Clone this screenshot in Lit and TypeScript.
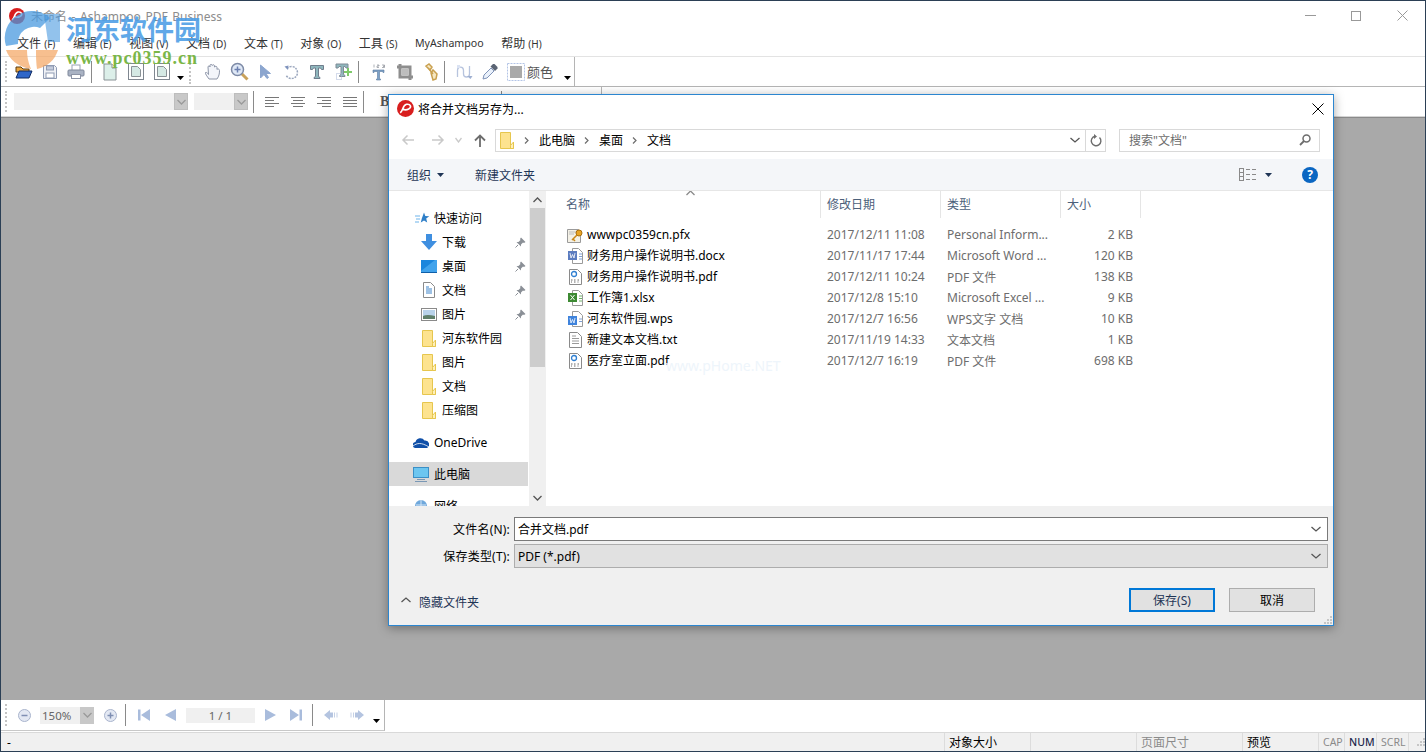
import { LitElement, html, svg, css } from "lit";
import { customElement } from "lit/decorators.js";

const ic = (w: number, h: number, body: unknown) =>
  html`<svg width=${w} height=${h} viewBox="0 0 ${w} ${h}" fill="none">${body}</svg>`;

const s = {
  logo: (n = 16) => html`<svg width=${n} height=${n} viewBox="0 0 16 16"><circle cx="8" cy="8" r="8" fill="#d81e1e"/><path d="M3 12 C6 10 5 5 9 4 C13 3.500 14 7 11 8.500 C9 9.500 7 9.500 5.500 8.500" fill="none" stroke="#fff" stroke-width="1.500"/></svg>`,
  open: ic(18, 16, svg`<path d="M1 3h5l2 2h6v3H1z" fill="#e8a33c" stroke="#5a3a10"/><path d="M1 14 4 7h13l-3 7z" fill="#2f66c8" stroke="#102a60"/>`),
  save: ic(16, 16, svg`<path d="M1.500 1.500h11l2 2v11h-13z" fill="#eef0f5" stroke="#8f9bb3"/><rect x="4.500" y="2" width="7" height="4" fill="#c4cbdb" stroke="#8f9bb3"/><rect x="4" y="9" width="8" height="5" fill="#fff" stroke="#8f9bb3"/>`),
  print: ic(18, 16, svg`<rect x="5" y="1" width="8" height="6" fill="#fff" stroke="#9aa3b5"/><rect x="1" y="6" width="16" height="6" rx="1" fill="#a9b2c3" stroke="#7f889b"/><rect x="4.500" y="10.500" width="9" height="4" fill="#fff" stroke="#8b93a5"/>`),
  doc: ic(16, 18, svg`<path d="M2 1h8l4 4v12H2z" fill="#dcefe9" stroke="#8a9296"/><path d="M10 1v4h4" fill="#fff" stroke="#8a9296"/>`),
  docf: ic(16, 18, svg`<rect x=".5" y=".5" width="15" height="16" fill="#fff" stroke="#7f8790"/><path d="M3.500 3.500h6l3 3v7h-9z" fill="#d5e9e4" stroke="#8a9296"/>`),
  hand: ic(18, 18, svg`<path d="M5 16C3 13 1 11 1.500 9.500 3 9 4 10.500 4.500 11.500L4 4C4 2.500 6 2.500 6 4V2.500C6 1 8 1 8.300 2.500V2.500C8.500 1.300 10.500 1.500 10.500 3V4C11 3 13 3 13 4.500V6.500C13.500 5.500 15.500 5.800 15.500 7.500 15.500 11 15 13 13 16z" fill="#f3f5fa" stroke="#8e96a8"/>`),
  zoom: ic(19, 19, svg`<path d="M11.500 11.500 17.500 17.500" stroke="#c9a25b" stroke-width="3"/><circle cx="7.500" cy="7.500" r="6" fill="#dfe8f6" stroke="#7d8aa6" stroke-width="1.500"/><path d="M4.500 7.500h6M7.500 4.500v6" stroke="#6b7fb0" stroke-width="1.500"/>`),
  arrow: ic(12, 16, svg`<path d="M1.500 1v13l3.500-3.500 3 4 1.500-1-2.500-4h4.500z" fill="#8ca6cf" stroke="#8ca6cf"/>`),
  rotate: ic(16, 16, svg`<path d="M4 4.500A6 6 0 1 1 3 11" stroke="#9aa6bd" stroke-width="1.500" stroke-dasharray="2 1"/><path d="M1.500 2.500 5.500 1.500 5 6z" fill="#7f93bd"/>`),
  t: ic(16, 16, svg`<path d="M1.500 1.500h13v4h-2l-1-1.500H9.500v8.500l1.500 1v1H5v-1l1.500-1V4H4.500l-1 1.500h-2z" fill="#8fb7bd" stroke="#6f7d8c"/>`),
  tp: ic(17, 17, svg`<path d="M1 1h12v4h-2l-1-1.500H8.500v8l1.500 1v1H4.500v-1l1.500-1v-8H4L3 5H1z" fill="#8fb7bd" stroke="#7f8a96"/><path d="M9 8h3V5h2v3h3v2h-3v3h-2v-3H9z" fill="#7fc96b"/><rect x="1.500" y="10.500" width="5" height="6" stroke="#a9b7d6" stroke-dasharray="1 1"/>`),
  t123: ic(16, 18, svg`<path d="M2 7h11v2.500h-1l-.5-1H8.500V15.500l1 .5v1H5.500v-1l1-.5V8.500H3.500L3 9.500H2z" fill="#7da3c9" stroke="#5c7aa0" stroke-width=".6"/><path d="M3 1.500v3M6 2h2v1H6v1.500h2M11 2h2.500v1.200H12h1.500v1.300H11" stroke="#8b8f98" stroke-width=".7"/>`),
  crop: ic(18, 18, svg`<path d="M4 1v13h13M1 4h13v13" stroke="#8e8e8e" stroke-width="3"/><rect x="5.500" y="5.500" width="7" height="7" fill="#bdbdbd"/>`),
  link: ic(14, 18, svg`<path d="M2 3 5 1l3 3-2 3zM7 10l2-3 4 4-1 5-3 1z" fill="#f6e8c3" stroke="#c9a04f" stroke-width="1.500"/><path d="M5 6l4 5" stroke="#c9a04f" stroke-width="1.500"/>`),
  pth: ic(17, 16, svg`<path d="M1.500 13V6.500C1.500 2 7.500 2 7.500 6.500V10C7.500 14 13.500 14 13.500 10V2" stroke="#b7c4de" stroke-width="1.300"/><path d="M11 12l3.500 3 2-3z" fill="#9fb0d1"/><rect x="1" y="1" width="3" height="3" fill="#dbe3f3"/>`),
  dropper: ic(16, 17, svg`<path d="M1 16 2 12 9 5 12 8 5 15z" fill="#eaf1fb" stroke="#7f93b8"/><path d="M8.500 3.500 11 1l1.500 0 3 3 0 1.500-2.500 2.500z" fill="#5b6474"/>`),
  color: ic(18, 18, svg`<rect x=".5" y=".5" width="17" height="17" fill="#fff" stroke="#b3c4e6" stroke-dasharray="2 1"/><rect x="3" y="3" width="12" height="12" fill="#a9a9a9"/>`),
  al: ic(14, 10, svg`<path d="M0 .5h14M0 3.500h9M0 6.500h14M0 9.500h9" stroke="#777"/>`),
  ac: ic(14, 10, svg`<path d="M0 .5h14M2 3.500h10M0 6.500h14M2 9.500h10" stroke="#777"/>`),
  ar: ic(14, 10, svg`<path d="M0 .5h14M5 3.500h9M0 6.500h14M5 9.500h9" stroke="#777"/>`),
  aj: ic(14, 10, svg`<path d="M0 .5h14M0 3.500h14M0 6.500h14M0 9.500h14" stroke="#777"/>`),
  minus: ic(13, 13, svg`<circle cx="6.500" cy="6.500" r="6" fill="#e3e8f3" stroke="#a9b4cc"/><path d="M3.500 6.500h6" stroke="#7f8fb3" stroke-width="1.500"/>`),
  plus: ic(13, 13, svg`<circle cx="6.500" cy="6.500" r="6" fill="#e3e8f3" stroke="#a9b4cc"/><path d="M3.500 6.500h6M6.500 3.500v6" stroke="#7f8fb3" stroke-width="1.500"/>`),
  first: ic(12, 12, svg`<path d="M0 .500h2.500v11H0zM12 0v12L3 6z" fill="#a9bcdc"/>`),
  prev: ic(11, 12, svg`<path d="M11 0v12L0 6z" fill="#a9bcdc"/>`),
  next: ic(11, 12, svg`<path d="M0 0v12L11 6z" fill="#a9bcdc"/>`),
  last: ic(12, 12, svg`<path d="M12 .5H9.500v11H12zM0 0v12L9 6z" fill="#a9bcdc"/>`),
  hback: ic(14, 10, svg`<path d="M0 5 6 0v2.500h3v5H6V10z" fill="#b4c4e0"/><path d="M10.500 2.500v5M13 2.500v5" stroke="#c5d1e6"/>`),
  hfwd: ic(14, 10, svg`<path d="M14 5 8 0v2.500H5v5h3V10z" fill="#b4c4e0"/><path d="M3.500 2.500v5M1 2.500v5" stroke="#c5d1e6"/>`),
  drop: ic(7, 4, svg`<path d="M0 0h7L3.500 4z" fill="#000"/>`),
  back: (c: string) => ic(14, 12, svg`<path d="M13 6H2M6.500 1.500 2 6l4.500 4.500" stroke=${c} stroke-width="1.500"/>`),
  fwd: (c: string) => ic(14, 12, svg`<path d="M1 6h11M7.500 1.500 12 6l-4.500 4.500" stroke=${c} stroke-width="1.500"/>`),
  up: ic(14, 13, svg`<path d="M7 13V2M2 6.500 7 1.500l5 5" stroke="#6d6d6d" stroke-width="1.800"/>`),
  chev: (c: string, w = 9) => ic(w, 6, svg`<path d="M.5 1 ${w / 2} 5 ${w - .5} 1" stroke=${c} stroke-width="1.300"/>`),
  chevUp: (c: string, w = 9) => ic(w, 6, svg`<path d="M.5 5 ${w / 2} 1 ${w - .5} 5" stroke=${c} stroke-width="1.300"/>`),
  crumb: ic(5, 7, svg`<path d="M1 .5 4 3.500 1 6.500" stroke="#6d6d6d" stroke-width="1.200"/>`),
  folder: ic(14, 17, svg`<path d="M.5.5h10v13h3v3H.5z" fill="#fde38f" stroke="#e6c64e"/><path d="M10.500 13.500 13.500 10v6.500h-3z" fill="#fff0b8" stroke="#e6c64e"/>`),
  refresh: ic(12, 13, svg`<path d="M9.500 3.500A4.800 4.800 0 1 1 5 2.200" stroke="#6d6d6d" stroke-width="1.400"/><path d="M4 0v5l3-2.500z" fill="#6d6d6d"/>`),
  search: ic(12, 12, svg`<circle cx="7.500" cy="4.500" r="3.500" stroke="#6d6d6d" stroke-width="1.500"/><path d="M5 7 1 11" stroke="#6d6d6d" stroke-width="1.800"/>`),
  caret: ic(7, 4, svg`<path d="M0 0h7L3.500 4z" fill="#1f3556"/>`),
  view: ic(17, 13, svg`<rect x=".5" y=".5" width="4" height="12" stroke="#8a8a8a"/><path d="M.5 4.500h4M.5 8.500h4M7 1.500h4M13 1.500h4M7 6.500h4M13 6.500h4M7 11.500h4M13 11.500h4" stroke="#8a8a8a"/>`),
  star: ic(15, 13, svg`<path d="M9 .5l1.300 3.500 4 .2-3.100 2.400 1 3.900L9 8.400l-3.200 2.100 1-3.900z" fill="#2f7fc8"/><path d="M0 4h5M1 7h4M0 10h4" stroke="#6db3ea"/>`),
  download: ic(16, 16, svg`<path d="M5 0h6v7h5l-8 9-8-9h5z" fill="#3f8fe0"/>`),
  desktop: ic(16, 13, svg`<rect width="16" height="12" fill="#1b86dd"/><path d="M0 12h16v1H0z" fill="#0f5fa8"/><path d="M0 11 14 0h2v12H0z" fill="#41a3ec"/>`),
  document: ic(12, 16, svg`<path d="M.5.5h7l4 4v11H.5z" fill="#fff" stroke="#8a8a8a"/><path d="M3 7h6M3 9h6M3 11h6M3 5h3" stroke="#3c83c8"/>`),
  picture: ic(16, 13, svg`<rect x=".5" y=".5" width="15" height="12" fill="#fff" stroke="#8a8a8a"/><rect x="2" y="2" width="12" height="9" fill="#b8d2ea"/><path d="M2 11V8q4-2 12 0v3z" fill="#5f7f6a"/>`),
  pin: ic(11, 11, svg`<path d="M6 .5 10.500 5 9 6 8 5.500 6 7.500 6 9.500 1.500 5 3.500 5 5.500 3 5 2z" fill="#8a8f96"/><path d="M3 8 .5 10.500" stroke="#8a8f96"/>`),
  cloud: ic(16, 11, svg`<path d="M3 11A3 3 0 0 1 2.500 5 5 5 0 0 1 11.500 3.500 4 4 0 0 1 14 11z" fill="#0f4fa8"/><path d="M0 9 C4 6 8 5 16 10" stroke="#fff" stroke-width=".8"/>`),
  pc: ic(16, 15, svg`<rect x=".5" y=".5" width="15" height="10" fill="#6cc6f0" stroke="#3b8fc6"/><path d="M4 12.500h8M2 14.500h12" stroke="#7a98b5" stroke-width="1.200"/>`),
  net: ic(16, 15, svg`<circle cx="8" cy="7" r="6" fill="#6fa8dc"/><path d="M3 6h10M8 1v12" stroke="#d6e6f5"/><path d="M0 14h16" stroke="#7a98b5" stroke-width="1.500"/>`),
  pfx: ic(16, 16, svg`<path d="M.5 2.500h11l2 2V15.500H.5z" fill="#f4f1e6" stroke="#9a9a9a"/><path d="M2 5h8M2 7h5" stroke="#bbb"/><circle cx="12" cy="6" r="3" fill="#e8a526" stroke="#a96f10"/><path d="M10 8 5 13M6 12l2 2" stroke="#c98716" stroke-width="1.500"/>`),
  word: ic(15, 16, svg`<path d="M4.500.5h6l4 4v11h-10z" fill="#fff" stroke="#9a9a9a"/><rect y="3" width="9" height="9" fill="#5b7cc0"/><path d="M2 5l1 5 1.500-3.500L6 10l1-5" stroke="#fff" stroke-width=".8"/><path d="M11 6h3M11 8.500h3M11 11h3" stroke="#7fa0d6"/>`),
  wps: ic(15, 16, svg`<path d="M4.500.5h6l4 4v11h-10z" fill="#fff" stroke="#9a9a9a"/><rect y="5" width="9" height="9" fill="#3f83dc"/><path d="M2 7l1 5 1.500-3.500L6 12l1-5" stroke="#fff" stroke-width=".8"/><path d="M11 8h3M11 10.500h3" stroke="#7fa0d6"/>`),
  excel: ic(15, 16, svg`<path d="M4.500.5h6l4 4v11h-10z" fill="#fff" stroke="#9a9a9a"/><rect y="3" width="9" height="9" fill="#3d8a33"/><path d="M2.500 5 6.500 10M6.500 5l-4 5" stroke="#fff"/><path d="M11 6h3M11 8.500h3M11 11h3" stroke="#6fb268"/>`),
  pdf: ic(13, 16, svg`<path d="M.5.5h8l4 4v11H.5z" fill="#fff" stroke="#8a8a8a"/><circle cx="5" cy="5" r="2.500" stroke="#2f7fd1" stroke-width="1.300"/><path d="M2 11h1.500M5 11h1.500M8.500 11h1.500M2 13h1M5 13h1.500M8.500 13h1" stroke="#666"/>`),
  txt: ic(13, 16, svg`<path d="M.5.5h8l4 4v11H.5z" fill="#fff" stroke="#8a8a8a"/><path d="M3 4h4M3 6.500h7M3 9h7M3 11.500h7" stroke="#9a9a9a"/>`),
  grip: ic(9, 8, svg`<path d="M7 0h2v2H7zM4 3h2v2H4zM7 3h2v2H7zM1 6h2v2H1zM4 6h2v2H4zM7 6h2v2H7z" fill="#c6c6c6"/>`),
  wm: html`<svg width="66" height="66" viewBox="0 0 66 66"><path d="M6 40A27 27 0 0 1 50 12L40 22A16 16 0 0 0 18 38z" fill="#4a9adf" opacity=".75"/><path d="M6 44h21c0 6 1 12 4 19C18 61 9 53 6 44z" fill="#f4a460" opacity=".7"/><path d="M36 44h22C55 54 47 61 37 63c-1-6-1-13-1-19z" fill="#f4a460" opacity=".7"/><path d="M44 8 60 8V36H48z" fill="#4a9adf" opacity=".6"/></svg>`,
};

const nav = [
  { icon: s.star, label: "快速访问", head: true },
  { icon: s.download, label: "下载", pin: true },
  { icon: s.desktop, label: "桌面", pin: true },
  { icon: s.document, label: "文档", pin: true },
  { icon: s.picture, label: "图片", pin: true },
  { icon: s.folder, label: "河东软件园" },
  { icon: s.folder, label: "图片" },
  { icon: s.folder, label: "文档" },
  { icon: s.folder, label: "压缩图" },
];

const files = [
  [s.pfx, "wwwpc0359cn.pfx", "2017/12/11 11:08", "Personal Inform...", "2 KB"],
  [s.word, "财务用户操作说明书.docx", "2017/11/17 17:44", "Microsoft Word ...", "120 KB"],
  [s.pdf, "财务用户操作说明书.pdf", "2017/12/11 10:24", "PDF 文件", "138 KB"],
  [s.excel, "工作簿1.xlsx", "2017/12/8 15:10", "Microsoft Excel ...", "9 KB"],
  [s.wps, "河东软件园.wps", "2017/12/7 16:56", "WPS文字 文档", "10 KB"],
  [s.txt, "新建文本文档.txt", "2017/11/19 14:33", "文本文档", "1 KB"],
  [s.pdf, "医疗室立面.pdf", "2017/12/7 16:19", "PDF 文件", "698 KB"],
];

@customElement("app-root")
export class AppRoot extends LitElement {
  static styles = css`
    :host {
      display: block;
      position: relative;
      width: 100%;
      height: 752px;
      overflow: hidden;
      background: #fff;
      font-family: "Noto Sans", "Noto Sans CJK SC", sans-serif;
      font-size: 12px;
      color: #000;
    }
    svg { display: block; flex: none; }
    .app { height: 752px; box-sizing: border-box; display: flex; flex-direction: column; border: 1px solid #2b3f55; }
    .title { height: 29px; display: flex; align-items: center; padding-left: 8px; color: #8c8c8c; flex: none; }
    .title .name { flex: 1; font-size: 12px; word-spacing: 1.500px; margin-left: 6px; }
    .wc { width: 46px; height: 29px; display: flex; align-items: center; justify-content: center; }
    .menu { height: 26px; flex: none; display: flex; align-items: center; padding-left: 16px; gap: 17.600px; border-bottom: 1px solid #e3e3e3; color: #333; font-size: 12px; }
    .menu small { font-size: 10px; }
    .menu .my { font-size: 10.600px; }
    .bar { flex: none; display: flex; height: 30px; box-sizing: border-box; border-bottom: 1px solid #d5d5d5; }
    .bar1 { border-bottom-color: #b5b5b5; }
    .tb { display: flex; align-items: center; padding-left: 10px; box-sizing: border-box; height: 100%; position: relative; }
    .tb.t1 { width: 574px; border-right: 1px solid #b5b5b5; }
    .tb.t2 { width: 601px; border-right: 1px solid #b5b5b5; }
    .grip { position: absolute; left: 4px; top: 4px; bottom: 4px; width: 2px; border-left: 2px dotted #c4c4c4; }
    .slot { width: 26px; height: 100%; display: flex; align-items: center; justify-content: center; flex: none; }
    .sep { width: 1px; height: 22px; background: #8a8a8a; flex: none; margin: 0 5px 0 2px; }
    .sep.b { margin: 0; }
    .sep.n { margin: 0; }
    .sep.w { margin: 0 7px 0 2px; }
    .sep.m { margin: 0 5px 0 2px; }
    .sep.m3 { margin: 0 5px 0 3px; }
    .dotsep { width: 2px; height: 24px; border-left: 2px dotted #c4c4c4; margin: 0 7px 0 5px; flex: none; }
    .dd { margin: 12px 0 0 2px; flex: none; }
    .dd.m3 { margin-left: 3px; }
    .coltxt { width: 35px; color: #555; font-size: 13px; flex: none; margin-left: -2px; }
    .combo { height: 17px; background: #f0f0f0; display: flex; justify-content: flex-end; flex: none; }
    .combo i { width: 14px; height: 17px; background: #c8c8c8; display: flex; align-items: center; justify-content: center; border: 1px solid #bdbdbd; box-sizing: border-box; }
    .c1 { width: 174px; margin-left: 3px; }
    .c2 { width: 54px; margin-left: 6px; }
    .t2 .sep.a { margin: 0 5px 0 5px; }
    .aslot { width: 26px; display: flex; justify-content: center; flex: none; }
    .bold { font-family: "Liberation Serif", serif; font-weight: bold; font-size: 14px; color: #555; margin-left: 16px; width: 121px; flex: none; }
    .pth { margin-left: 6px; }
    .canvas { flex: 1; background: #a9a9a9; border-top: 1px solid #8a8a8a; }
    .bottom { height: 32px; flex: none; display: flex; }
    .tb.t3 { width: 384px; border-right: 1px solid #b5b5b5; border-bottom: 1px solid #c8c8c8; padding-left: 10px; height: 31px; }
    .z { width: 26px; display: flex; justify-content: center; flex: none; }
    .z.ml { margin-left: 2px; }
    .zc { width: 54px; margin: 0 3px 0 3px; background: #f0f0f0; height: 17px; color: #666; display: flex; justify-content: space-between; flex: none; font-size: 11.500px; line-height: 17px; padding-left: 2px; box-sizing: border-box; }
    .zc i { width: 14px; background: #c8c8c8; display: flex; align-items: center; justify-content: center; }
    .pg { width: 69px; height: 15px; line-height: 15px; background: #f0f0f0; color: #666; text-align: center; flex: none; font-size: 11.500px; margin-left: 3px; }
    .status { height: 18px; flex: none; background: #f0f0f0; border-top: 1px solid #d9d9d9; display: flex; align-items: center; font-size: 12px; }
    .st { height: 100%; box-sizing: border-box; padding-left: 4px; border-right: 1px solid #dcdcdc; flex: none; display: flex; align-items: center; white-space: nowrap; overflow: hidden; }
    .st.gray { color: #8a8a8a; }
    .st.sm { font-size: 10.500px; }
    .st.strong { font-weight: 500; color: #1f2a4d; }
    .st.first { padding-left: 6px; width: 944px; }
    .w86 { width: 86px; } .w106 { width: 106px; } .w76 { width: 76px; } .w26 { width: 26px; } .w32 { width: 32px; }
    .sgrip { margin-left: 7px; }

    .wm { position: absolute; left: 0; top: 6px; pointer-events: none; }
    .wmt { position: absolute; left: 66px; top: 12px; font-size: 27px; line-height: 36px; font-weight: 700; color: #4f9fe6; opacity: .9; white-space: nowrap; pointer-events: none; }
    .wmu { position: absolute; left: 66px; top: 47px; font: bold 18px/22px "Liberation Serif", serif; letter-spacing: 1px; color: #7ab648; white-space: nowrap; pointer-events: none; }

    .dlg { position: absolute; left: 388px; top: 94px; width: 946px; height: 532px; box-sizing: border-box; background: #fff; border: 1px solid #2c86d0; box-shadow: 0 2px 10px rgba(0,0,0,.35); display: flex; flex-direction: column; }
    .dt { height: 27px; flex: none; display: flex; align-items: center; padding-left: 8px; gap: 4px; color: #000; }
    .dt span { flex: 1; }
    .dt b { width: 30px; display: flex; justify-content: center; }
    .dnav { height: 30px; margin-top: 3px; flex: none; display: flex; align-items: center; }
    .nb { flex: none; display: flex; justify-content: center; }
    .n1 { width: 14px; margin-left: 12px; }
    .n2 { width: 14px; margin-left: 16px; }
    .n3 { width: 9px; margin-left: 9px; }
    .n4 { width: 14px; margin-left: 10px; }
    .addr { width: 611px; height: 23px; margin-left: 8px; box-sizing: border-box; border: 1px solid #d9d9d9; display: flex; align-items: center; padding-left: 4px; flex: none; }
    .addr .p { margin-left: 10px; }
    .addr span { margin: 0 9px 0 10px; color: #000; }
    .addr .sp { flex: 1; }
    .addr .rf { width: 19px; height: 100%; border-left: 1px solid #d9d9d9; display: flex; align-items: center; justify-content: center; margin-left: 5px; }
    .srch { width: 201px; height: 23px; margin-left: 13px; box-sizing: border-box; border: 1px solid #d9d9d9; display: flex; align-items: center; justify-content: space-between; padding: 0 8px 0 9px; color: #6d6d6d; flex: none; }
    .cmd { height: 31px; margin-top: 4px; flex: none; background: #f4f6f9; border-bottom: 1px solid #e6e6e6; display: flex; align-items: center; color: #1f3556; padding-left: 18px; }
    .cmd .org { display: flex; align-items: center; gap: 6px; width: 68px; }
    .cmd .gap { flex: 1; }
    .cmd .v { margin-right: 9px; }
    .help { width: 16px; height: 16px; border-radius: 50%; background: #0a66c2; color: #fff; font-weight: 700; font-size: 12px; line-height: 16px; text-align: center; margin: 0 15px 0 30px; }
    .body { height: 315px; flex: none; display: flex; overflow: hidden; }
    .np { width: 140px; flex: none; padding: 15px 1px 0 0; box-sizing: border-box; overflow: hidden; }
    .ni { height: 24px; display: flex; align-items: center; position: relative; color: #000; }
    .ni .ico { width: 16px; margin-left: 32px; margin-right: 5px; display: flex; justify-content: center; flex: none; }
    .ni.h .ico { margin-left: 25px; margin-right: 4px; }
    .ni.l .ico { margin-left: 24px; margin-right: 5px; }
    .ni .pn { position: absolute; right: 2px; top: 7px; }
    .ni.sel { background: #d9d9d9; }
    .gapped { margin-top: 8px; }
    .sb { width: 17px; flex: none; background: #f0f0f0; display: flex; flex-direction: column; align-items: center; }
    .sb .a { height: 17px; display: flex; align-items: center; justify-content: center; flex: none; }
    .sb .th { width: 15px; height: 159px; background: #cdcdcd; flex: none; margin-right: 1px; }
    .sb .sp { flex: 1; }
    .list { flex: 1; position: relative; min-width: 0; }
    .hdr { height: 27px; display: flex; color: #4c607a; position: relative; }
    .hc { border-right: 1px solid #e5e5e5; padding-left: 6px; box-sizing: border-box; line-height: 27px; flex: none; }
    .hc.name { width: 275px; padding-left: 20px; }
    .hc.date, .hc.type { width: 120px; }
    .hc.size { width: 80px; }
    .sort { position: absolute; left: 140px; top: -1px; }
    .rows { padding-top: 6px; }
    .row { height: 21px; display: flex; align-items: center; color: #6d6d6d; }
    .row .fi { width: 16px; margin-left: 21px; margin-right: 4px; display: flex; justify-content: center; flex: none; }
    .row .n { width: 240px; color: #000; flex: none; white-space: nowrap; }
    .row + .row .n { margin-bottom: 2px; }
    .row .d { width: 120px; flex: none; }
    .row .t { width: 120px; flex: none; white-space: nowrap; }
    .row .s { width: 66px; text-align: right; flex: none; }
    .faint { position: absolute; left: 120px; top: 165px; color: #eef5fb; font-size: 14px; }
    .foot { flex: 1; background: #f0f0f0; display: flex; flex-direction: column; position: relative; }
    .fr { display: flex; align-items: center; flex: none; }
    .fr label { width: 121px; text-align: right; color: #000; flex: none; letter-spacing: .2px; }
    .in { margin-left: 4px; width: 814px; box-sizing: border-box; display: flex; align-items: center; justify-content: space-between; padding: 0 6px 0 3px; flex: none; }
    .in.a { height: 24px; background: #fff; border: 1px solid #7a7a7a; }
    .in.b { height: 24px; background: #e1e1e1; border: 1px solid #adadad; }
    .r1 { margin-top: 11px; }
    .r2 { margin-top: 3px; }
    .act { display: flex; align-items: center; margin-top: 20px; padding-left: 12px; }
    .act .hide { margin-left: 8px; flex: 1; color: #1f3556; padding-top: 4px; }
    .btn { width: 86px; height: 24px; box-sizing: border-box; background: #e1e1e1; border: 1px solid #adadad; display: flex; align-items: center; justify-content: center; flex: none; }
    .btn.pri { border: 2px solid #0078d7; color: #1f3556; margin-right: 14px; }
    .btn.sec { margin-right: 18px; }
    .dgrip { position: absolute; right: 1px; bottom: 1px; }
  `;

  private slots(list: unknown[]) {
    return list.map((i) => html`<div class="slot">${i}</div>`);
  }

  render() {
    return html`
      <div class="app">
        <div class="title">
          ${s.logo(16)}
          <span class="name">未命名 - Ashampoo PDF Business</span>
          <div class="wc">${ic(11, 1, svg`<path d="M0 .5h11" stroke="#999"/>`)}</div>
          <div class="wc">${ic(10, 10, svg`<rect x=".5" y=".5" width="9" height="9" stroke="#999"/>`)}</div>
          <div class="wc">${ic(11, 11, svg`<path d="M.5.5l10 10M10.500.5l-10 10" stroke="#999"/>`)}</div>
        </div>
        <div class="menu">
          <span>文件 <small>(F)</small></span><span>编辑 <small>(E)</small></span><span>视图 <small>(V)</small></span>
          <span>文档 <small>(D)</small></span><span>文本 <small>(T)</small></span><span>对象 <small>(O)</small></span>
          <span>工具 <small>(S)</small></span><span class="my">MyAshampoo</span><span>帮助 <small>(H)</small></span>
        </div>
        <div class="bar bar1">
          <div class="tb t1">
            <div class="grip"></div>
            ${this.slots([s.open, s.save, s.print])}
            <div class="sep"></div>
            ${this.slots([s.doc, s.docf, s.docf])}
            <div class="dd">${s.drop}</div>
            <div class="dotsep"></div>
            ${this.slots([s.hand, s.zoom, s.arrow, s.rotate, s.t, s.tp])}
            <div class="sep w"></div>
            ${this.slots([s.t123, s.crop, s.link])}
            <div class="sep b"></div>
            <div class="slot pth">${s.pth}</div>
            ${this.slots([s.dropper, s.color])}
            <span class="coltxt">颜色</span>
            <div class="dd">${s.drop}</div>
          </div>
        </div>
        <div class="bar">
          <div class="tb t2">
            <div class="grip"></div>
            <div class="combo c1"><i>${s.chev("#9a9a9a")}</i></div>
            <div class="combo c2"><i>${s.chev("#9a9a9a")}</i></div>
            <div class="sep a"></div>
            <div class="aslot">${s.al}</div><div class="aslot">${s.ac}</div><div class="aslot">${s.ar}</div><div class="aslot">${s.aj}</div>
            <div class="sep n"></div>
            <span class="bold">B</span>
            <div class="sep n"></div>
          </div>
        </div>
        <div class="canvas"></div>
        <div class="bottom">
          <div class="tb t3">
            <div class="grip"></div>
            <div class="z">${s.minus}</div>
            <div class="zc">150%<i>${s.chev("#9a9a9a")}</i></div>
            <div class="z">${s.plus}</div>
            <div class="sep m"></div>
            <div class="z">${s.first}</div><div class="z">${s.prev}</div>
            <div class="pg">1 / 1</div>
            <div class="z ml">${s.next}</div><div class="z">${s.last}</div>
            <div class="sep m3"></div>
            <div class="z">${s.hback}</div><div class="z">${s.hfwd}</div>
            <div class="dd m3">${s.drop}</div>
          </div>
        </div>
        <div class="status">
          <div class="st first">-</div>
          <div class="st w86">对象大小</div>
          <div class="st w106"></div>
          <div class="st gray w106">页面尺寸</div>
          <div class="st w76">预览</div>
          <div class="st gray sm w26">CAP</div>
          <div class="st sm strong w32">NUM</div>
          <div class="st gray sm w32">SCRL</div>
          <div class="sgrip">${s.grip}</div>
        </div>
      </div>

      <div class="wm">${s.wm}</div>
      <div class="wmt">河东软件园</div>
      <div class="wmu">www.pc0359.cn</div>

      <div class="dlg">
        <div class="dt">${s.logo(17)}<span>将合并文档另存为...</span>
          <b>${ic(12, 12, svg`<path d="M.5.5l11 11M11.500.5l-11 11" stroke="#000"/>`)}</b></div>
        <div class="dnav">
          <div class="nb n1">${s.back("#c9c9c9")}</div>
          <div class="nb n2">${s.fwd("#c9c9c9")}</div>
          <div class="nb n3">${s.chev("#c9c9c9", 7)}</div>
          <div class="nb n4">${s.up}</div>
          <div class="addr">
            ${s.folder}<div class="p">${s.crumb}</div><span>此电脑</span>${s.crumb}<span>桌面</span>${s.crumb}<span>文档</span>
            <div class="sp"></div>${s.chev("#555", 10)}<div class="rf">${s.refresh}</div>
          </div>
          <div class="srch"><span>搜索"文档"</span>${s.search}</div>
        </div>
        <div class="cmd">
          <div class="org">组织 ${s.caret}</div>
          <span>新建文件夹</span>
          <div class="gap"></div>
          <div class="v">${s.view}</div>${s.caret}
          <div class="help">?</div>
        </div>
        <div class="body">
          <div class="np">
            ${nav.map((n) => html`<div class="ni ${n.head ? "h" : ""}"><div class="ico">${n.icon}</div>${n.label}${n.pin ? html`<div class="pn">${s.pin}</div>` : ""}</div>`)}
            <div class="ni l gapped"><div class="ico">${s.cloud}</div>OneDrive</div>
            <div class="ni l sel gapped"><div class="ico">${s.pc}</div>此电脑</div>
            <div class="ni l gapped"><div class="ico">${s.net}</div>网络</div>
          </div>
          <div class="sb">
            <div class="a">${s.chevUp("#555")}</div>
            <div class="th"></div>
            <div class="sp"></div>
            <div class="a">${s.chev("#555")}</div>
          </div>
          <div class="list">
            <div class="hdr">
              <div class="hc name">名称</div><div class="hc date">修改日期</div><div class="hc type">类型</div><div class="hc size">大小</div>
              <div class="sort">${s.chevUp("#8a8a8a")}</div>
            </div>
            <div class="rows">
              ${files.map((f) => html`<div class="row"><div class="fi">${f[0]}</div><div class="n">${f[1]}</div><div class="d">${f[2]}</div><div class="t">${f[3]}</div><div class="s">${f[4]}</div></div>`)}
            </div>
            <div class="faint">www.pHome.NET</div>
          </div>
        </div>
        <div class="foot">
          <div class="fr r1"><label>文件名(N):</label><div class="in a">合并文档.pdf${s.chev("#555", 10)}</div></div>
          <div class="fr r2"><label>保存类型(T):</label><div class="in b">PDF (*.pdf)${s.chev("#555", 10)}</div></div>
          <div class="act">
            ${s.chevUp("#555", 10)}<span class="hide">隐藏文件夹</span>
            <div class="btn pri">保存(S)</div><div class="btn sec">取消</div>
          </div>
          <div class="dgrip">${s.grip}</div>
        </div>
      </div>
    `;
  }
}
